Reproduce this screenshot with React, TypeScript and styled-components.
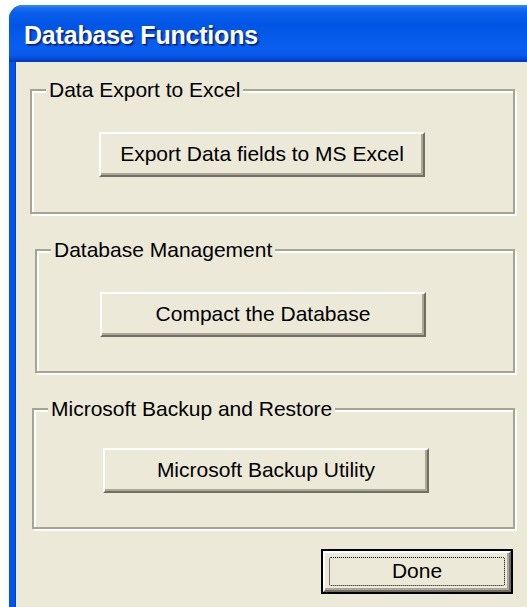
import React from "react";
import styled, { createGlobalStyle } from "styled-components";

const Global = createGlobalStyle`
  html, body {
    margin: 0;
    padding: 0;
    background: #ffffff;
    overflow: hidden;
  }
  body {
    font-family: "Liberation Sans", Arial, sans-serif;
  }
`;

const Window = styled.div`
  margin: 5px 0 0 9px;
  width: 540px;
  height: 620px;
  display: flex;
  flex-direction: column;
  border-radius: 14px 14px 0 0;
  overflow: hidden;
  background: #0055ea;
`;

const TitleBar = styled.div`
  height: 57px;
  flex: none;
  display: flex;
  align-items: center;
  padding: 3px 0 0 15px;
  box-sizing: border-box;
  background: linear-gradient(
    to bottom,
    #3b8cf5 0px,
    #1a6ff0 3px,
    #0a5fea 8px,
    #0055e5 20px,
    #0a5eee 40px,
    #0a5aea 50px,
    #0347d8 54px,
    #0036b8 57px
  );
`;

const Title = styled.h1`
  margin: 0;
  font-family: "Liberation Sans", Arial, sans-serif;
  font-weight: bold;
  font-size: 25px;
  letter-spacing: -0.2px;
  color: #ffffff;
  text-shadow: 1px 1px 0 #0a1e7a, 2px 2px 1px rgba(10, 30, 122, 0.6);
`;

const Body = styled.div`
  flex: 1;
  margin-left: 6px;
  background: #ece9d8;
  box-shadow: inset 1px 0 0 #0a3fbf;
  padding: 17px 0 0 15px;
  display: flex;
  flex-direction: column;
  font-size: 21px;
  color: #000;
`;

const Group = styled.fieldset<{ $inset: number; $height: number }>`
  margin: 0 0 0 ${(p) => p.$inset}px;
  width: ${(p) => 485 - p.$inset}px;
  height: ${(p) => p.$height}px;
  box-sizing: border-box;
  padding: 0;
  border: 2px solid #a7a493;
  box-shadow: inset 2px 2px 0 #ffffff, 2px 2px 0 #ffffff;
  min-inline-size: 0;
  & + & {
    margin-top: 25px;
  }
`;

const Legend = styled.legend`
  margin-left: 14px;
  padding: 0 3px;
  background: #ece9d8;
  font-size: 21px;
  line-height: 22px;
  color: #000;
`;

const ActionButton = styled.button<{ $left: number; $top: number }>`
  display: block;
  margin: ${(p) => p.$top}px 0 0 ${(p) => p.$left}px;
  width: 326px;
  height: 45px;
  box-sizing: border-box;
  font-family: inherit;
  font-size: 21px;
  color: #000;
  background: #ece9d8;
  border: 2px solid;
  border-color: #ffffff #716f64 #716f64 #ffffff;
  box-shadow: inset -2px -2px 0 #aca899;
  padding: 0 0 2px;
  cursor: default;
`;

const Footer = styled.div`
  display: flex;
  justify-content: flex-end;
  width: 483px;
  margin-top: 20px;
`;

const DefaultButton = styled.button`
  width: 192px;
  height: 45px;
  box-sizing: border-box;
  padding: 0;
  border: 2px solid #000;
  background: #ece9d8;
  display: flex;
  font-family: inherit;
  font-size: 21px;
  color: #000;
  cursor: default;
`;

const Bevel = styled.span`
  flex: 1;
  display: flex;
  padding: 4px;
  border: 2px solid;
  border-color: #ffffff #716f64 #716f64 #ffffff;
  box-shadow: inset -2px -2px 0 #aca899;
`;

const FocusRing = styled.span`
  flex: 1;
  display: flex;
  align-items: center;
  justify-content: center;
  border: 1.5px dotted #000;
  border-radius: 2px;
  padding-bottom: 2px;
`;

export default function App() {
  return (
    <>
      <Global />
      <Window>
        <TitleBar>
          <Title>Database Functions</Title>
        </TitleBar>
        <Body>
          <Group $inset={0} $height={135}>
            <Legend>Data Export to Excel</Legend>
            <ActionButton $left={67} $top={31}>
              Export Data fields to MS Excel
            </ActionButton>
          </Group>
          <Group $inset={5} $height={134}>
            <Legend>Database Management</Legend>
            <ActionButton $left={63} $top={31}>
              Compact the Database
            </ActionButton>
          </Group>
          <Group $inset={2} $height={131}>
            <Legend>Microsoft Backup and Restore</Legend>
            <ActionButton $left={69} $top={28}>
              Microsoft Backup Utility
            </ActionButton>
          </Group>
          <Footer>
            <DefaultButton>
              <Bevel>
                <FocusRing>Done</FocusRing>
              </Bevel>
            </DefaultButton>
          </Footer>
        </Body>
      </Window>
    </>
  );
}
